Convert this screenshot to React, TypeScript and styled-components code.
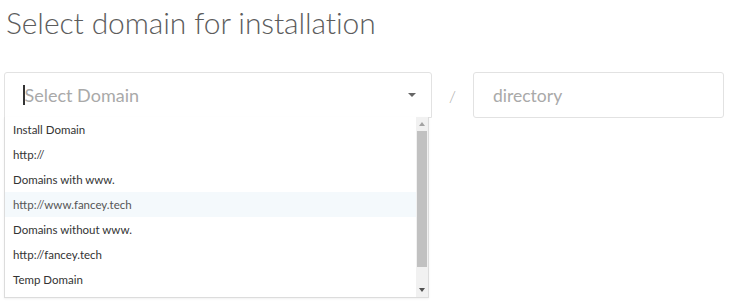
import React from "react";
import styled, { createGlobalStyle } from "styled-components";

const Global = createGlobalStyle`
  html, body { margin: 0; padding: 0; background: #fff; }
  body { font-family: "Lato", "Liberation Sans", sans-serif; }
`;

const Page = styled.div`
  padding: 0 0 0 4px;
  width: 730px;
  height: 306px;
  box-sizing: border-box;
  overflow: hidden;
`;

const Heading = styled.h1`
  margin: 0;
  padding: 3px 0 0 2px;
  font-family: "Lato", sans-serif;
  font-weight: 300;
  font-size: 30px;
  line-height: 38px;
  color: #5c5c5c;
  letter-spacing: -0.1px;
`;

const FieldRow = styled.div`
  display: flex;
  align-items: center;
  margin-top: 31px;
`;

const SelectWrap = styled.div`
  position: relative;
  width: 428px;
`;

const SelectBox = styled.div`
  box-sizing: border-box;
  height: 46px;
  border: 1px solid #e2e2e2;
  border-radius: 3px 3px 0 0;
  display: flex;
  align-items: center;
  padding: 0 14px 0 18px;
`;

const Caret = styled.span`
  width: 1.5px;
  height: 20px;
  background: #333;
  margin-right: 0;
`;

const Placeholder = styled.span`
  flex: 1;
  font-family: "Lato", sans-serif;
  font-size: 18px;
  color: #a9a9a9;
`;

const Arrow = styled.span`
  width: 0;
  height: 0;
  border-left: 4px solid transparent;
  border-right: 4px solid transparent;
  border-top: 4px solid #666;
  margin-right: 1px;
`;

const Menu = styled.div`
  position: absolute;
  top: 45px;
  left: 0;
  width: 425px;
  height: 181px;
  box-sizing: border-box;
  border: 1px solid #dcdcdc;
  border-top: none;
  background: #fff;
  display: flex;
  box-shadow: 0 1px 2px rgba(0, 0, 0, 0.06);
`;

const Options = styled.div`
  flex: 1;
  display: flex;
  flex-direction: column;
`;

const Option = styled.div<{ $active?: boolean }>`
  height: 25px;
  line-height: 26px;
  padding-left: 8px;
  font-family: "Lato", sans-serif;
  font-size: 11.5px;
  color: ${(p) => (p.$active ? "#555" : "#333")};
  background: ${(p) => (p.$active ? "#f4f9fc" : "transparent")};
`;

const ScrollTrack = styled.div`
  width: 12px;
  background: #f1f1f1;
  display: flex;
  flex-direction: column;
  align-items: center;
`;

const ScrollBtn = styled.div`
  height: 14px;
  width: 12px;
  display: flex;
  align-items: center;
  justify-content: center;
`;

const Tri = styled.span<{ $up?: boolean }>`
  width: 0;
  height: 0;
  border-left: 3.5px solid transparent;
  border-right: 3.5px solid transparent;
  ${(p) =>
    p.$up
      ? "border-bottom: 4px solid #a3a3a3;"
      : "border-top: 4px solid #505050;"}
`;

const Thumb = styled.div`
  width: 10px;
  height: 136px;
  background: #c1c1c1;
`;

const Spacer = styled.div`
  flex: 1;
`;

const Slash = styled.span`
  width: 41px;
  text-align: center;
  font-family: "Lato", sans-serif;
  font-weight: 300;
  font-size: 16px;
  color: #aaa;
`;

const Input = styled.div`
  box-sizing: border-box;
  width: 251px;
  height: 46px;
  border: 1px solid #e2e2e2;
  border-radius: 3px;
  display: flex;
  align-items: center;
  padding-left: 19px;
  font-family: "Lato", sans-serif;
  font-size: 17.5px;
  color: #a9a9a9;
`;

const options = [
  "Install Domain",
  "http://",
  "Domains with www.",
  "http://www.fancey.tech",
  "Domains without www.",
  "http://fancey.tech",
  "Temp Domain",
];

export default function App() {
  return (
    <>
      <Global />
      <Page>
        <Heading>Select domain for installation</Heading>
        <FieldRow>
          <SelectWrap>
            <SelectBox>
              <Caret />
              <Placeholder>Select Domain</Placeholder>
              <Arrow />
            </SelectBox>
            <Menu>
              <Options>
                {options.map((o, i) => (
                  <Option key={o} $active={i === 3}>
                    {o}
                  </Option>
                ))}
              </Options>
              <ScrollTrack>
                <ScrollBtn>
                  <Tri $up />
                </ScrollBtn>
                <Thumb />
                <Spacer />
                <ScrollBtn>
                  <Tri />
                </ScrollBtn>
              </ScrollTrack>
            </Menu>
          </SelectWrap>
          <Slash>/</Slash>
          <Input>directory</Input>
        </FieldRow>
      </Page>
    </>
  );
}
